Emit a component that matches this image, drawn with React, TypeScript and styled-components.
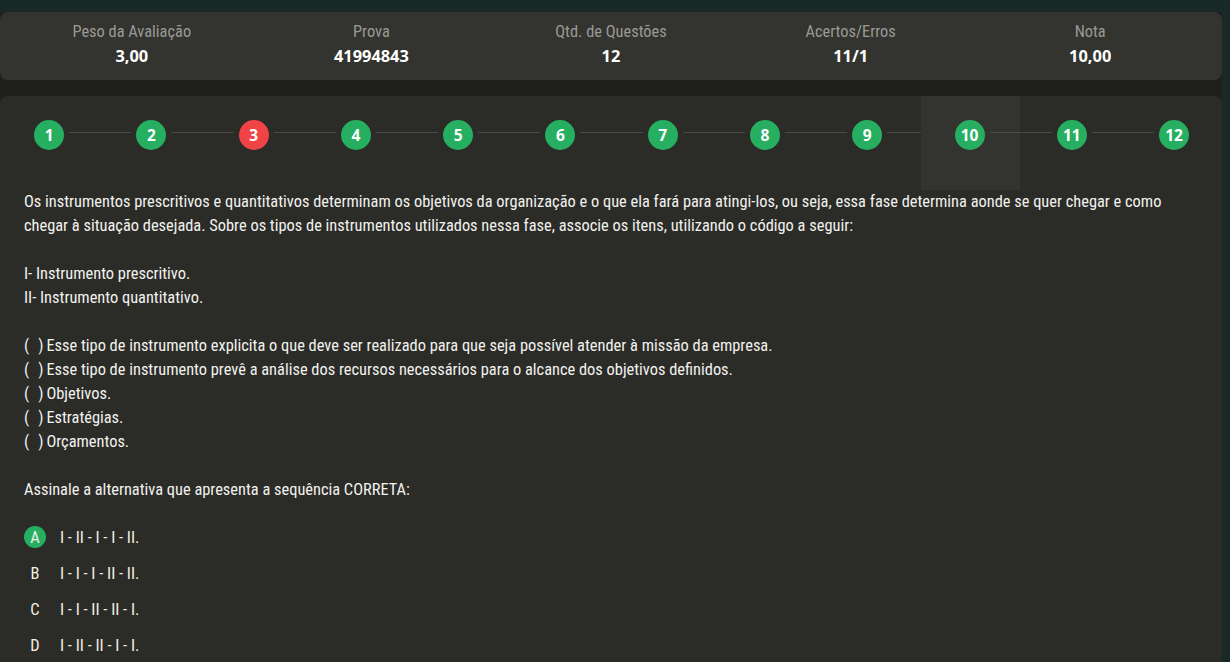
import styled, { createGlobalStyle } from 'styled-components'

const GlobalStyle = createGlobalStyle`
  html, body {
    margin: 0;
    padding: 0;
    background: #192928;
    font-family: "Roboto Condensed", "Liberation Sans", Arial, sans-serif;
    color: #f2f2ee;
  }
`

type Status = 'ok' | 'wrong'

const steps: Status[] = ['ok', 'ok', 'wrong', 'ok', 'ok', 'ok', 'ok', 'ok', 'ok', 'ok', 'ok', 'ok']
const currentStep = 10

const summary = [
  { label: 'Peso da Avaliação', value: '3,00' },
  { label: 'Prova', value: '41994843' },
  { label: 'Qtd. de Questões', value: '12' },
  { label: 'Acertos/Erros', value: '11/1' },
  { label: 'Nota', value: '10,00' },
]

const statement: (string | string[])[] = [
  'Os instrumentos prescritivos e quantitativos determinam os objetivos da organização e o que ela fará para atingi-los, ou seja, essa fase determina aonde se quer chegar e como chegar à situação desejada. Sobre os tipos de instrumentos utilizados nessa fase, associe os itens, utilizando o código a seguir:',
  ['I- Instrumento prescritivo.', 'II- Instrumento quantitativo.'],
  [
    'Esse tipo de instrumento explicita o que deve ser realizado para que seja possível atender à missão da empresa.',
    'Esse tipo de instrumento prevê a análise dos recursos necessários para o alcance dos objetivos definidos.',
    'Objetivos.',
    'Estratégias.',
    'Orçamentos.',
  ],
  'Assinale a alternativa que apresenta a sequência CORRETA:',
]

const options = [
  { letter: 'A', text: 'I - II - I - I - II.', chosen: true },
  { letter: 'B', text: 'I - I - I - II - II.', chosen: false },
  { letter: 'C', text: 'I - I - II - II - I.', chosen: false },
  { letter: 'D', text: 'I - II - II - I - I.', chosen: false },
]

export default function App() {
  return (
    <>
      <GlobalStyle />
      <Page>
        <SummaryCard>
          {summary.map((s) => (
            <SummaryItem key={s.label}>
              <SummaryLabel>{s.label}</SummaryLabel>
              <SummaryValue>{s.value}</SummaryValue>
            </SummaryItem>
          ))}
        </SummaryCard>

        <QuestionCard>
          <Steps>
            {steps.map((status, i) => (
              <Step key={i} active={i + 1 === currentStep} last={i === steps.length - 1}>
                <StepDot status={status}>{i + 1}</StepDot>
              </Step>
            ))}
          </Steps>

          <Body>
            {statement.map((block, i) => (
              <Paragraph key={i}>
                {Array.isArray(block)
                  ? block.map((line) =>
                      i === 2 ? (
                        <Line key={line}>
                          <Blank>(</Blank>
                          <Blank>)</Blank>
                          {line}
                        </Line>
                      ) : (
                        <Line key={line}>{line}</Line>
                      ),
                    )
                  : block}
              </Paragraph>
            ))}
          </Body>

          <Options>
            {options.map((o) => (
              <Option key={o.letter}>
                <Letter chosen={o.chosen}>{o.letter}</Letter>
                <OptionText>{o.text}</OptionText>
              </Option>
            ))}
          </Options>
        </QuestionCard>
      </Page>
    </>
  )
}

const Page = styled.div`
  width: 1222px;
  margin-top: 12px;
  min-height: 650px;
  background: #1e1e1c;
  display: flex;
  flex-direction: column;
  gap: 16px;
`

const SummaryCard = styled.div`
  height: 68px;
  box-sizing: border-box;
  padding: 0 12px 5px;
  background: #33332f;
  border-radius: 8px;
  display: grid;
  grid-template-columns: repeat(5, 1fr);
  align-items: center;
`

const SummaryItem = styled.div`
  display: flex;
  flex-direction: column;
  align-items: center;
  gap: 2px;
`

const SummaryLabel = styled.span`
  font-size: 16.4px;
  line-height: 22px;
  color: #9a9a95;
`

const SummaryValue = styled.span`
  font-family: "Open Sans", "Liberation Sans", sans-serif;
  font-size: 16.4px;
  line-height: 22px;
  font-weight: 700;
  color: #ffffff;
`

const QuestionCard = styled.div`
  flex: 1;
  background: #2b2b28;
  border-radius: 8px 8px 0 0;
  overflow: hidden;
`

const Steps = styled.div`
  display: grid;
  grid-template-columns: repeat(12, 102.27px);
  margin-left: -2px;
  height: 94px;
`

const Step = styled.div<{ active: boolean; last: boolean }>`
  position: relative;
  display: flex;
  justify-content: center;
  padding-top: 24px;
  box-sizing: border-box;
  background: ${(p) =>
    p.active
      ? 'linear-gradient(90deg, transparent 3px, #33332f 3px, #33332f calc(100% - 1px), transparent calc(100% - 1px))'
      : 'transparent'};

  &::after {
    content: '';
    display: ${(p) => (p.last ? 'none' : 'block')};
    position: absolute;
    top: 36px;
    left: calc(50% + 20px);
    width: calc(100% - 40px);
    height: 1px;
    background: #4a4a45;
  }
`

const StepDot = styled.div<{ status: Status }>`
  width: 30px;
  height: 30px;
  border-radius: 50%;
  background: ${(p) => (p.status === 'wrong' ? '#ef4346' : '#26ae61')};
  color: #ffffff;
  font-family: "Open Sans", "Liberation Sans", sans-serif;
  font-weight: 700;
  font-size: 15.5px;
  display: flex;
  align-items: center;
  justify-content: center;
`

const Body = styled.div`
  padding: 0 24px;
  font-size: 16.4px;
  line-height: 24px;
  display: flex;
  flex-direction: column;
  gap: 24px;
`

const Paragraph = styled.div`
  margin: 0;
`

const Line = styled.div`
  display: flex;
  align-items: baseline;
`

const Blank = styled.span`
  &:first-child {
    margin-right: 9px;
  }
  &:nth-child(2) {
    margin-right: 3px;
  }
`

const Options = styled.div`
  margin-top: 24px;
  padding: 0 24px;
  display: flex;
  flex-direction: column;
  gap: 14px;
`

const Option = styled.div`
  display: flex;
  align-items: center;
  gap: 14px;
`

const Letter = styled.div<{ chosen: boolean }>`
  width: 22px;
  height: 22px;
  border-radius: 50%;
  background: ${(p) => (p.chosen ? '#26ae61' : 'transparent')};
  color: #f3efe2;
  font-size: 16.4px;
  display: flex;
  align-items: center;
  justify-content: center;
`

const OptionText = styled.span`
  font-size: 16.4px;
  color: #f3efe2;
`
